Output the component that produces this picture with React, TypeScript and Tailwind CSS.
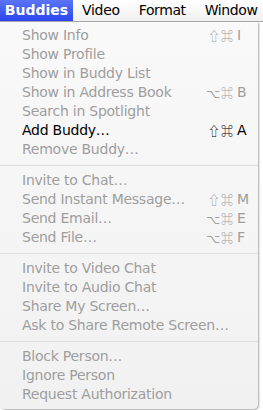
import React from 'react';

type Item = { label: string; keys?: string[]; key?: string; enabled?: boolean } | 'sep';

const items: Item[] = [
  { label: 'Show Info', keys: ['⇧', '⌘'], key: 'I' },
  { label: 'Show Profile' },
  { label: 'Show in Buddy List' },
  { label: 'Show in Address Book', keys: ['⌥', '⌘'], key: 'B' },
  { label: 'Search in Spotlight' },
  { label: 'Add Buddy…', keys: ['⇧', '⌘'], key: 'A', enabled: true },
  { label: 'Remove Buddy…' },
  'sep',
  { label: 'Invite to Chat…' },
  { label: 'Send Instant Message…', keys: ['⇧', '⌘'], key: 'M' },
  { label: 'Send Email…', keys: ['⌥', '⌘'], key: 'E' },
  { label: 'Send File…', keys: ['⌥', '⌘'], key: 'F' },
  'sep',
  { label: 'Invite to Video Chat' },
  { label: 'Invite to Audio Chat' },
  { label: 'Share My Screen…' },
  { label: 'Ask to Share Remote Screen…' },
  'sep',
  { label: 'Block Person…' },
  { label: 'Ignore Person' },
  { label: 'Request Authorization' },
];

export default function App() {
  return (
    <div
      className="relative w-[263px] h-[410px] overflow-hidden bg-white"
      style={{ fontFamily: '"DejaVu Sans", sans-serif' }}
    >
      {/* menu bar */}
      <div className="flex h-[22px] items-stretch border-b border-[#a8a8a8] bg-gradient-to-b from-white to-[#f0f0f0] text-[14px] text-black">
        <div className="flex w-[73px] items-center justify-center bg-gradient-to-b from-[#5b74f7] to-[#2c44ef] font-bold text-white">
          Buddies
        </div>
        <div className="flex items-center pl-[9px] tracking-[-0.3px]">Video</div>
        <div className="flex items-center pl-[19px] tracking-[-0.4px]">Format</div>
        <div className="flex items-center pl-[19px] tracking-[-0.4px]">Window</div>
      </div>

      {/* dropdown */}
      <div className="w-[258px] rounded-b-[5px] bg-gradient-to-b from-[#f9f9f9] to-[#f1f1f1] pt-[4px] pb-[5px] shadow-[1px_1px_2px_rgba(0,0,0,0.35)] text-[14px] tracking-[-0.25px]">
        {items.map((it, i) =>
          it === 'sep' ? (
            <div key={i} className="flex h-[12px] items-center">
              <div className="h-px w-full bg-[#dddddd]" />
            </div>
          ) : (
            <div
              key={i}
              className={`flex h-[19px] items-center pl-[22px] pr-[11px] ${
                it.enabled ? 'text-black' : 'text-[#9e9e9e]'
              }`}
            >
              <span className="flex-1 whitespace-nowrap">{it.label}</span>
              {it.key && it.keys && (
                <span className="flex items-center tracking-normal">
                  <span
                    className="flex gap-[1px] text-[12px] leading-none"
                    style={{ fontFamily: '"Noto Sans CJK JP", "DejaVu Sans", sans-serif' }}
                  >
                    <span>{it.keys[0]}</span>
                    <span>{it.keys[1]}</span>
                  </span>
                  <span className="w-[14px] pl-[4px]">{it.key}</span>
                </span>
              )}
            </div>
          )
        )}
      </div>
    </div>
  );
}
